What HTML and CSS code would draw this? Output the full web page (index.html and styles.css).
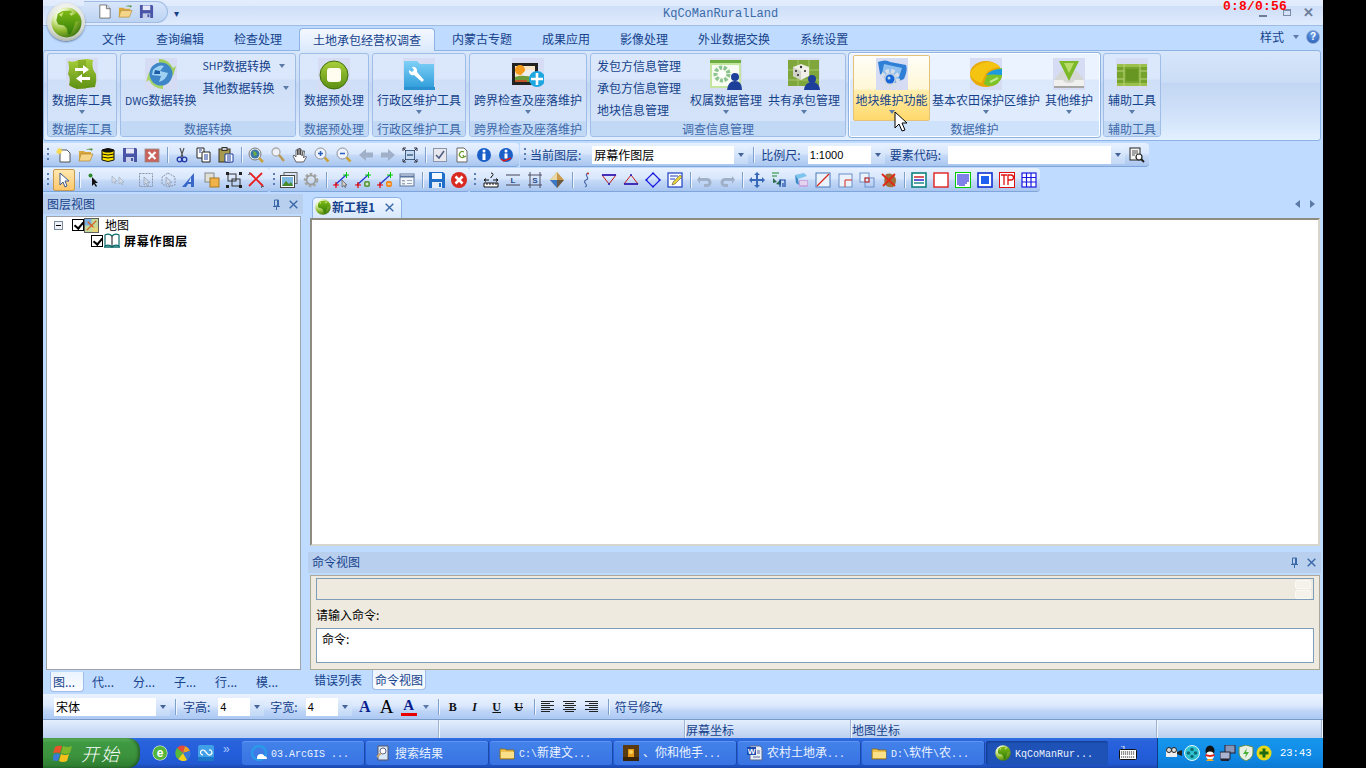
FILE: index.html
```html
<!DOCTYPE html>
<html lang="zh-CN">
<head>
<meta charset="utf-8">
<title>KqCoManRuralLand</title>
<link rel="stylesheet" href="styles.css">
</head>
<body>
<svg class="sprite" xmlns="http://www.w3.org/2000/svg">
<defs>
<radialGradient id="gGlobe" cx=".3" cy=".22" r=".9"><stop offset="0" stop-color="#ffffff"/><stop offset=".3" stop-color="#dcefa8"/><stop offset=".62" stop-color="#8db82c"/><stop offset="1" stop-color="#2f6a0c"/></radialGradient>
<linearGradient id="gLand" x1="0" y1="0" x2="0" y2="1"><stop offset="0" stop-color="#7fbb14"/><stop offset="1" stop-color="#2f7a0a"/></linearGradient>
<linearGradient id="gGreen" x1="0" y1="0" x2="0" y2="1"><stop offset="0" stop-color="#a9cf3a"/><stop offset="1" stop-color="#5c8f14"/></linearGradient>
<linearGradient id="gBlue" x1="0" y1="0" x2="0" y2="1"><stop offset="0" stop-color="#7fd0f7"/><stop offset="1" stop-color="#2a9ad8"/></linearGradient>

<symbol id="b-db" viewBox="0 0 32 32"><path d="M2 3q6 2 10-1l9-1 6 1q-2 8 3 14 1 7-1 13l-8 1-10 1q-6-2-8-4 2-6-1-11 2-6 0-13z" fill="url(#gGreen)"/><path d="M12 2h8v29h-8z" fill="#6d9a18" opacity=".5"/><path d="M9 10h8V7l6 4.5-6 4.5v-3H9zM24 19h-8v-3l-6 4.5 6 4.5v-3h8z" fill="#fff"/></symbol>
<symbol id="b-dwg" viewBox="0 0 32 32"><path d="M14 1a15 15 0 0 1 14 9l3-2-3 10-7-6 3-1a11 11 0 0 0-10-6z" fill="#9fcf5a"/><path d="M18 31A15 15 0 0 1 4 22l-3 2 3-10 7 6-3 1a11 11 0 0 0 10 6z" fill="#a8d468"/><circle cx="16" cy="16" r="11.500" fill="#3f86c8"/><path d="M8 12q6-6 11-4l-4 5 8 2q-2 7-9 9l2-6-9-1z" fill="#9fd2f2"/><path d="M10 12l5 1 0 3-6 0z" fill="#1b5ea6"/></symbol>
<symbol id="b-stop" viewBox="0 0 32 32"><circle cx="16" cy="17" r="14" fill="url(#gGreen)"/><circle cx="16" cy="17" r="14" fill="none" stroke="#3f6f10" stroke-width="1"/><rect x="9" y="10" width="14" height="14" rx="3" fill="#fffdf0"/></symbol>
<symbol id="b-folder" viewBox="0 0 32 32"><path d="M1 3h13l3 3h14v26H1z" fill="url(#gBlue)"/><path d="M1 29h31v3H1z" fill="#2a90d0"/><path d="M9 9a4 4 0 0 1 5 5l7 8-2 2-8-7a4 4 0 0 1-5-5l3 2 2-2z" fill="#fff"/></symbol>
<symbol id="b-pic" viewBox="0 0 32 32"><rect x="0" y="5" width="26" height="22" fill="#222"/><rect x="3" y="8" width="20" height="16" fill="#f6e6c6"/><circle cx="8" cy="12" r="5" fill="#f49a1a"/><path d="M10 16q6-7 13-3v6H10z" fill="#eee"/><path d="M3 19q8-3 20 1v4H3z" fill="#6f9c3a"/><path d="M3 22h12v2H3z" fill="#c0552a"/><circle cx="25" cy="21" r="8" fill="#1ea6e0"/><path d="M23.700 15h2.600v4.700H31v2.600h-4.700V27h-2.600v-4.700H19v-2.600h4.700z" fill="#fff"/></symbol>
<symbol id="b-gearuser" viewBox="0 0 32 32"><rect x="0" y="2" width="31" height="28" fill="#c4e5a0"/><path d="M0 2h31v3H0z" fill="#6cae42"/><rect x="2" y="7" width="27" height="21" fill="#f7fbf1"/><circle cx="12" cy="16" r="6.500" fill="none" stroke="#8bc48f" stroke-width="4" stroke-dasharray="3 1.500"/><circle cx="12" cy="16" r="3" fill="#fff"/><circle cx="25" cy="19" r="4" fill="#1d3f9a"/><path d="M17 32q1-9 8-9t7 9z" fill="#1d3f9a"/></symbol>
<symbol id="b-dice" viewBox="0 0 32 32"><rect x="0" y="2" width="31" height="26" fill="#7fa63a"/><path d="M0 12h31M0 22h31M10 2v26M21 2v26" stroke="#a7c66c" stroke-width="1" fill="none"/><path d="M13 6l8 3v9l-8 4-8-4V9z" fill="#f0f0e8"/><path d="M13 13v9l-8-4V9z" fill="#cfd0c6"/><g fill="#333"><circle cx="13" cy="9" r="1.200"/><circle cx="8" cy="13" r="1.100"/><circle cx="10" cy="17" r="1.100"/><circle cx="17" cy="13" r="1.100"/></g><circle cx="24" cy="21" r="4" fill="#1d3f9a"/><path d="M16 32q1-8 8-8t8 8z" fill="#1d3f9a"/></symbol>
<symbol id="b-fgear" viewBox="0 0 32 32"><path d="M2 4q8-3 12 0l16 3q2 5-2 14L16 26 4 16z" fill="#2f7fd6"/><path d="M8 6l18 4-4 12-16-6z" fill="#8fc0f0"/><circle cx="14" cy="21" r="8" fill="none" stroke="#d8dee8" stroke-width="4" stroke-dasharray="3.500 2"/><circle cx="14" cy="21" r="6" fill="#c8d2e0"/><circle cx="14" cy="21" r="4.500" fill="#1565d8"/><circle cx="13" cy="20" r="1.500" fill="#bde"/></symbol>
<symbol id="b-pie" viewBox="0 0 32 32"><ellipse cx="16" cy="16" rx="16" ry="13" fill="#e8a908"/><path d="M0 16q4-10 17-12 9 0 13 5-12 1-15 8t-4 8Q2 22 0 16z" fill="#f5c411"/><path d="M14 26q2-14 18-16v8q-2 10-14 10z" fill="#7cc32a"/><path d="M16 17q5-6 16-6v6q-10-1-16 0z" fill="#1d9be0"/><path d="M20 24l8-4" stroke="#bfe98a" stroke-width="2"/></symbol>
<symbol id="b-tray" viewBox="0 0 32 32"><path d="M8 13h16l7 9v7H1v-7z" fill="#d5d7d5"/><path d="M1 22h9q1 3 6 3t6-3h9v7H1z" fill="#f0f0ee"/><path d="M1 28h30v2H1z" fill="#a6a8a6"/><path d="M6 3h20l-10 20z" fill="#7cb928"/><path d="M11 5h10l-5 10z" fill="#b9dc6a"/></symbol>
<symbol id="b-map" viewBox="0 0 32 32"><rect x="1" y="6" width="30" height="22" fill="#76a32c"/><path d="M1 6h30v3H1zM1 25h30v3H1z" fill="#9dc04c"/><path d="M8 6v22M24 6v22" stroke="#b9d47a" stroke-width="1"/><path d="M1 13h7M1 21h7M24 13h7M24 21h7" stroke="#b9d47a"/><rect x="10" y="11" width="12" height="12" fill="#679722"/></symbol>

<symbol id="globe" viewBox="0 0 32 32"><circle cx="16" cy="16" r="15.500" fill="url(#gGlobe)"/><path d="M7 7l5-3 8-.5 2 2-3 1.500 2 2 5-3 3 3q1 3 .5 5l-4 1-1.500 4.500L22 25l-2 3.500-2.500 0-1-6-3-3.500-6-1-2-4z" fill="url(#gLand)"/><path d="M8 8l5-3-2 5z" fill="#c7e26a"/></symbol>
<symbol id="new" viewBox="0 0 16 16"><path d="M3 1h7l4 4v10H3z" fill="#fff" stroke="#555" stroke-width=".8"/><path d="M10 1v4h4" fill="#d8d8d8" stroke="#555" stroke-width=".8"/></symbol>
<symbol id="newstar" viewBox="0 0 16 16"><path d="M4 3h7l3 3v9H4z" fill="#fff" stroke="#444" stroke-width=".9"/><path d="M3 0l1 2 2-1-1 2 2 1-2 1 1 2-2-1-1 2-1-2-2 1 1-2-1-1 2-1-1-2 2 1z" fill="#f6d94c"/></symbol>
<symbol id="open" viewBox="0 0 16 16"><path d="M1 4h5l1 1h6v2H4L1 14z" fill="#d9a83c"/><path d="M3 7h12l-3 7H1z" fill="#f5d58a" stroke="#a87c1c" stroke-width=".6"/><path d="M8 3q2-2 5-1l-1-1 3 1-2 2v-1q-3-1-5 0z" fill="#4a8a2a"/></symbol>
<symbol id="save" viewBox="0 0 16 16"><path d="M1 1h13l1 1v13H1z" fill="#4a55a8"/><rect x="4" y="1.500" width="8" height="5" fill="#e4e8f8"/><rect x="4" y="10" width="8" height="5" fill="#c6cfe8"/><rect x="9" y="11" width="2" height="3" fill="#4a55a8"/></symbol>
<symbol id="dbicon" viewBox="0 0 16 16"><path d="M2 3q6-3 12 0v10q-6 3-12 0z" fill="#ffe600" stroke="#111" stroke-width="1"/><ellipse cx="8" cy="3.500" rx="6" ry="2" fill="#111"/><path d="M2 7q6 2 12 0M2 10q6 2 12 0" fill="none" stroke="#111"/></symbol>
<symbol id="xbox" viewBox="0 0 16 16"><rect x="1" y="2" width="14" height="13" fill="#c8625a" stroke="#9a8a88" stroke-width=".8"/><path d="M4.500 5l7 7M11.500 5l-7 7" stroke="#fff" stroke-width="2.200"/></symbol>
<symbol id="cut" viewBox="0 0 16 16"><path d="M6 1l3 9M10 1L7 10" stroke="#555" stroke-width="1.200"/><circle cx="5.500" cy="12.500" r="2.300" fill="none" stroke="#2036a8" stroke-width="1.300"/><circle cx="10.500" cy="12.500" r="2.300" fill="none" stroke="#2036a8" stroke-width="1.300"/></symbol>
<symbol id="copy" viewBox="0 0 16 16"><path d="M1 1h7v10H1z" fill="#fff" stroke="#222"/><path d="M6 5h8v10H6z" fill="#fff" stroke="#222"/><path d="M3 3h3M3 5h2M8 8h4M8 10h4M8 12h4" stroke="#1c3fa0"/></symbol>
<symbol id="paste" viewBox="0 0 16 16"><rect x="1" y="2" width="11" height="13" fill="#a89a4c" stroke="#333"/><rect x="4" y="0.500" width="5" height="3" fill="#c8c8c8" stroke="#333"/><path d="M7 7h8v8H7z" fill="#fff" stroke="#1c3fa0"/><path d="M9 9h4M9 11h4M9 13h4" stroke="#1c3fa0"/></symbol>
<symbol id="gsearch" viewBox="0 0 16 16"><circle cx="7" cy="7" r="6" fill="#f4f4f0" stroke="#777"/><circle cx="7" cy="7" r="4.500" fill="#3b78a8"/><path d="M5 4l3 1 1 3-3 1z" fill="#6cae42"/><path d="M11 11l4 4" stroke="#c9a23a" stroke-width="2.500"/></symbol>
<symbol id="lens" viewBox="0 0 16 16"><circle cx="6" cy="5" r="4" fill="#eef2f8" stroke="#aaa" stroke-width="1.300"/><path d="M9 8l5 6" stroke="#b89a5a" stroke-width="2.500"/></symbol>
<symbol id="hand" viewBox="0 0 16 16"><path d="M4 15l-3-6 1-1 2 2V3h1.500v5-6H7v6-6.500h1.500V8V3H10v6l1-5h1.500l-1 7 2-2 1 1-3 5z" fill="#fff" stroke="#444" stroke-width=".8"/></symbol>
<symbol id="zin" viewBox="0 0 16 16"><circle cx="6.500" cy="6.500" r="5.500" fill="#eef3fb" stroke="#8a8f98"/><path d="M4 6.500h5M6.500 4v5" stroke="#2a5fc0" stroke-width="1.500"/><path d="M10.500 10.500l4 4" stroke="#c9a23a" stroke-width="2.500"/></symbol>
<symbol id="zout" viewBox="0 0 16 16"><circle cx="6.500" cy="6.500" r="5.500" fill="#eef3fb" stroke="#8a8f98"/><path d="M4 6.500h5" stroke="#2a5fc0" stroke-width="1.500"/><path d="M10.500 10.500l4 4" stroke="#c9a23a" stroke-width="2.500"/></symbol>
<symbol id="aback" viewBox="0 0 16 16"><path d="M1 8l7-6v3.500h7v5H8V14z" fill="#9fb0c8"/></symbol>
<symbol id="afwd" viewBox="0 0 16 16"><path d="M15 8L8 2v3.500H1v5h7V14z" fill="#9fb0c8"/></symbol>
<symbol id="fit" viewBox="0 0 16 16"><rect x="3.500" y="3.500" width="9" height="9" fill="#c7d9ef" stroke="#43628a"/><path d="M5 8h6" stroke="#43628a" stroke-width="1.500"/><path d="M1 4V1h3M12 1h3v3M15 12v3h-3M4 15H1v-3M1 1l3 3M15 1l-3 3M15 15l-3-3M1 15l3-3" fill="none" stroke="#334"/></symbol>
<symbol id="chk" viewBox="0 0 16 16"><rect x="1.500" y="1.500" width="13" height="13" fill="#e6e8ee" stroke="#8c96a8"/><path d="M4 8l3 3 5-7" fill="none" stroke="#4a5a80" stroke-width="1.500"/></symbol>
<symbol id="docg" viewBox="0 0 16 16"><path d="M3 1h7l3 3v11H3z" fill="#fff" stroke="#666"/><path d="M10 5a3 3 0 1 0 0 5M9 8l1 2 2-1" fill="none" stroke="#6a9a2a" stroke-width="1.200"/></symbol>
<symbol id="info" viewBox="0 0 16 16"><circle cx="8" cy="8" r="7" fill="#1a5fc8"/><circle cx="8" cy="4" r="1.500" fill="#fff"/><rect x="6.500" y="6.500" width="3" height="6.500" fill="#fff"/></symbol>
<symbol id="infor" viewBox="0 0 16 16"><circle cx="8" cy="8" r="7" fill="#1a5fc8"/><circle cx="8" cy="4" r="1.500" fill="#fff"/><rect x="6.500" y="6.500" width="3" height="5" fill="#fff"/><path d="M3 12l3 2 7-3" fill="none" stroke="#e01818" stroke-width="1.500"/></symbol>
<symbol id="find" viewBox="0 0 16 16"><rect x="1" y="1" width="10" height="12" fill="#f4f4f4" stroke="#222"/><path d="M3 4h6M3 6h6M3 8h3" stroke="#555"/><circle cx="10" cy="10" r="3" fill="#fff" stroke="#222" stroke-width="1.200"/><path d="M12 12l3 3" stroke="#222" stroke-width="2"/></symbol>

<symbol id="arrow" viewBox="0 0 16 16"><path d="M4 1v12l3-3 2 5 2-1-2-5h4z" fill="#fff" stroke="#3a5a90"/></symbol>
<symbol id="black" viewBox="0 0 16 16"><path d="M6 5v9l2-2 2 3 1-1-2-3h3z" fill="#111"/><circle cx="4.500" cy="3.500" r="2" fill="#2a8a2a"/></symbol>
<symbol id="arrows2" viewBox="0 0 16 16"><path d="M2 4v7l2-1.500 1 2.500 1-.5-1-2.500h2zM9 5v7l2-1.500 1 2.500 1-.5-1-2.500h2z" fill="#d6dde8" stroke="#9aa8bc" stroke-width=".6"/></symbol>
<symbol id="seld" viewBox="0 0 16 16"><rect x="1.500" y="1.500" width="13" height="13" fill="none" stroke="#8a94a8" stroke-dasharray="2 1"/><path d="M6 5v8l2-2 1 3 1.500-.5-1-3H12z" fill="#cfd8e6" stroke="#8a94a8" stroke-width=".6"/></symbol>
<symbol id="seld2" viewBox="0 0 16 16"><path d="M8 1L15 5v8l-7 2-6-3V5z" fill="none" stroke="#8a94a8" stroke-dasharray="2 1"/><path d="M6 5v8l2-2 1 3 1.500-.5-1-3H12z" fill="#cfd8e6" stroke="#8a94a8" stroke-width=".6"/></symbol>
<symbol id="ablue" viewBox="0 0 16 16"><path d="M12 1v14H9v-3H6l-2 3H0z" fill="#3a68c8"/><path d="M9 5v5H6.500z" fill="#cfe0f6"/></symbol>
<symbol id="squares" viewBox="0 0 16 16"><rect x="1" y="1" width="9" height="9" fill="#e0e0d8" stroke="#888"/><rect x="6" y="6" width="9" height="9" fill="#f2b24a" stroke="#a67a20"/></symbol>
<symbol id="group" viewBox="0 0 16 16"><rect x="2" y="2" width="8" height="7" fill="none" stroke="#333"/><rect x="6" y="7" width="8" height="7" fill="none" stroke="#333"/><path d="M0 0h3v3H0zM13 0h3v3h-3zM0 13h3v3H0zM13 13h3v3h-3z" fill="#222"/></symbol>
<symbol id="redx" viewBox="0 0 16 16"><path d="M1 14L14 1M2 1l13 13" stroke="#e82020" stroke-width="1.800"/><path d="M1 3v-2h2M13 15h2v-2" fill="none" stroke="#111" stroke-dasharray="1 1"/></symbol>
<symbol id="picture" viewBox="0 0 18 16"><rect x="4" y="0.500" width="13" height="11" fill="#d8e4f4" stroke="#666"/><rect x="0.500" y="3.500" width="14" height="12" fill="#fff" stroke="#444"/><rect x="2" y="5" width="11" height="9" fill="#7fb8e0"/><path d="M2 14l4-5 3 3 2-2 2 4z" fill="#4b8a2a"/></symbol>
<symbol id="gear" viewBox="0 0 16 16"><circle cx="8" cy="8" r="5.500" fill="none" stroke="#a6a8a6" stroke-width="3.500" stroke-dasharray="2.500 1.500"/><circle cx="8" cy="8" r="4.500" fill="none" stroke="#9a9c9a" stroke-width="1.500"/><circle cx="8" cy="8" r="2" fill="#d8dce2"/></symbol>
<symbol id="e1" viewBox="0 0 16 16"><path d="M2 13L13 3" stroke="#2233cc" stroke-width="1.200"/><path d="M10 3h7M13.500 0v6" stroke="#0c0" stroke-width="1"/><path d="M0 13h6M3 10v6" stroke="#e00" stroke-width="1.200"/><path d="M9 8v7l2-1.500 1 2 1-.5-1-2h2z" fill="#ccc" stroke="#444" stroke-width=".6"/></symbol>
<symbol id="e2" viewBox="0 0 16 16"><path d="M2 13L13 3" stroke="#2233cc" stroke-width="1.200"/><path d="M10 3h7M13.500 0v6" stroke="#0c0"/><path d="M0 13h6M3 10v6" stroke="#e00" stroke-width="1.200"/><rect x="9" y="9" width="6" height="6" rx="2" fill="#5a9a3a"/><path d="M10.500 12h3M12 10.500v3" stroke="#fff"/></symbol>
<symbol id="e3" viewBox="0 0 16 16"><path d="M2 13L13 3" stroke="#2233cc" stroke-width="1.200"/><path d="M10 3h7M13.500 0v6" stroke="#0c0"/><path d="M0 13h6M3 10v6" stroke="#e00" stroke-width="1.200"/><rect x="9" y="9" width="6" height="6" rx="2" fill="#f08a1a"/><path d="M10.500 12h3" stroke="#fff"/></symbol>
<symbol id="form" viewBox="0 0 16 16"><rect x="1" y="2" width="14" height="12" fill="#f4f6fa" stroke="#5a76a0"/><path d="M1 4.500h14" stroke="#5a76a0" stroke-width="2"/><path d="M3 8h3v1.500H3zM3 11h3v1.500H3z" fill="#9ab"/><path d="M8 8.500h5M8 11.500h5" stroke="#9ab"/></symbol>
<symbol id="saveb" viewBox="0 0 16 16"><path d="M0 0h14l2 2v14H0z" fill="#1f6ec8"/><rect x="3" y="1" width="10" height="6" fill="#f4f8ff"/><rect x="3" y="10" width="10" height="6" fill="#e4ecf8"/><rect x="10" y="11" width="2" height="4" fill="#1f6ec8"/></symbol>
<symbol id="stopred" viewBox="0 0 16 16"><circle cx="8" cy="8" r="8" fill="#d82a20"/><path d="M4.500 4.500l7 7M11.500 4.500l-7 7" stroke="#fff" stroke-width="2.600"/></symbol>
<symbol id="ruler" viewBox="0 0 16 16"><path d="M1 11h14v4H1z" fill="#fff" stroke="#111"/><path d="M4 11v2M7 11v2M10 11v2M13 11v2" stroke="#111"/><path d="M1 8h5M1 8l2-1.500M1 8l2 1.500M15 8h-5M15 8l-2-1.500M15 8l-2 1.500M8 1q2 0 2 1.500T8 5v1" fill="none" stroke="#111"/></symbol>
<symbol id="lbar" viewBox="0 0 16 16"><path d="M1 3h14M1 13h14" stroke="#445"/><text x="8" y="11" font-size="8" fill="#2a4a8a" text-anchor="middle" font-family="Liberation Sans">L</text></symbol>
<symbol id="sbar" viewBox="0 0 16 16"><path d="M1 3h14M1 13h14M3 0v16M13 0v16" stroke="#445" stroke-width=".9"/><text x="8" y="11" font-size="8" fill="#2a4a8a" text-anchor="middle" font-family="Liberation Sans" font-weight="bold">S</text></symbol>
<symbol id="mosaic" viewBox="0 0 16 16"><path d="M8 0l7 8-7 8-7-8z" fill="#c89a4a"/><path d="M8 0v8H1z" fill="#e8d8a8"/><path d="M8 8h7l-7 8z" fill="#6a5a4a"/><path d="M8 8v8L1 8z" fill="#3a78c8"/></symbol>
<symbol id="squig" viewBox="0 0 16 16"><path d="M9 1C4 3 12 6 7 8s4 5-1 7" fill="none" stroke="#4a6aa8" stroke-width="1.200"/><circle cx="9" cy="1.500" r="1" fill="#c22"/></symbol>
<symbol id="tdown" viewBox="0 0 16 16"><path d="M1 3h14L8 12z" fill="none" stroke="#c01818"/><path d="M1 3h14" stroke="#1818c8" stroke-width="1.500"/><circle cx="8" cy="12" r="1" fill="#1818c8"/></symbol>
<symbol id="tup" viewBox="0 0 16 16"><path d="M1 12h14L8 3z" fill="none" stroke="#c01818"/><path d="M1 12h14" stroke="#1818c8" stroke-width="1.500"/><circle cx="8" cy="3" r="1" fill="#1818c8"/></symbol>
<symbol id="diam" viewBox="0 0 16 16"><path d="M8 1l7 7-7 7-7-7z" fill="none" stroke="#1818e0" stroke-width="1.200"/><g fill="#1818e0"><circle cx="8" cy="1.500" r="1"/><circle cx="8" cy="14.500" r="1"/><circle cx="1.500" cy="8" r="1"/><circle cx="14.500" cy="8" r="1"/></g></symbol>
<symbol id="editp" viewBox="0 0 16 16"><rect x="1" y="1" width="14" height="14" fill="#fff" stroke="#1a3fc0" stroke-width="1.200"/><path d="M3 4h8M3 7h5" stroke="#1a3fc0"/><path d="M5 13l1-3 7-7 2 2-7 7z" fill="#e8d23a" stroke="#555" stroke-width=".6"/></symbol>
<symbol id="undo" viewBox="0 0 16 16"><path d="M3 6h7a4 4 0 0 1 0 9H7v-3h3a1 1 0 0 0 0-3H3v3L0 7.500 3 4z" fill="#9fb0c8"/></symbol>
<symbol id="redo" viewBox="0 0 16 16"><path d="M13 6H6a4 4 0 0 0 0 9h3v-3H6a1 1 0 0 1 0-3h7v3l3-4.500L13 4z" fill="#9fb0c8"/></symbol>
<symbol id="move" viewBox="0 0 16 16"><path d="M8 0l3 3H9v4h4V5l3 3-3 3V9H9v4h2l-3 3-3-3h2V9H3v2L0 8l3-3v2h4V3H5z" fill="#3a68b8"/></symbol>
<symbol id="trans" viewBox="0 0 16 16"><path d="M1 1h7M1 4h5" stroke="#1a8a2a" stroke-width="1.200"/><path d="M2 6l4 4-4 1zM10 7l-5 5 5 1z" fill="#2a6a4a"/><path d="M9 15V8h5v7M12 15v-4" fill="none" stroke="#1a4aa8" stroke-width="1.200"/></symbol>
<symbol id="stack" viewBox="0 0 16 16"><path d="M2 3l9-2 3 3-9 3z" fill="#7cc4ec"/><path d="M2 3l3 4 1 6-3-2z" fill="#3a8ac8"/><rect x="6" y="8" width="9" height="7" fill="#c8a8e0"/><path d="M7 10h7M7 12h7" stroke="#fff"/></symbol>
<symbol id="sqdiag" viewBox="0 0 16 16"><rect x="1" y="1" width="14" height="14" fill="#eaf2fc" stroke="#4a78b8"/><path d="M2 14L14 2" stroke="#d8281c" stroke-width="1.200"/></symbol>
<symbol id="sqcorner" viewBox="0 0 16 16"><rect x="2" y="2" width="13" height="13" fill="#eaf2fc" stroke="#6a90c8"/><path d="M8 15V8h7" fill="none" stroke="#d8281c"/></symbol>
<symbol id="sqover" viewBox="0 0 16 16"><rect x="1" y="1" width="9" height="9" fill="#eaf2fc" stroke="#6a90c8"/><rect x="6" y="6" width="9" height="9" fill="none" stroke="#6a90c8"/><rect x="6" y="6" width="4" height="4" fill="none" stroke="#d8281c"/></symbol>
<symbol id="bug" viewBox="0 0 16 16"><path d="M5 2q6-2 9 3t-2 10q-6 1-8-3T5 2z" fill="#a0703a"/><path d="M1 2l13 12M14 2L2 14" stroke="#e02818" stroke-width="1.800"/></symbol>
<symbol id="f1" viewBox="0 0 16 16"><rect x="1" y="1" width="14" height="14" fill="#fff" stroke="#108080" stroke-width="1.600"/><path d="M3 5h10" stroke="#c81818" stroke-width="1.400"/><path d="M3 8h10" stroke="#1818c8" stroke-width="1.400"/><path d="M3 11h10" stroke="#108080" stroke-width="1.400"/></symbol>
<symbol id="f2" viewBox="0 0 16 16"><rect x="1" y="1" width="14" height="14" fill="#fff" stroke="#e01010" stroke-width="1.300"/></symbol>
<symbol id="f3" viewBox="0 0 16 16"><rect x="0.500" y="0.500" width="15" height="15" fill="#fff" stroke="#0c0"/><path d="M3 2v11M5 2v12M7 2v12M9 2v12M11 2v10M13 2v8" stroke="#1818d8" stroke-width="1.100"/></symbol>
<symbol id="f4" viewBox="0 0 16 16"><rect x="1" y="1" width="14" height="14" fill="#fff" stroke="#1030d0" stroke-width="1.600"/><rect x="4" y="4" width="8" height="8" fill="#2060f0"/></symbol>
<symbol id="f5" viewBox="0 0 16 16"><rect x="0.500" y="0.500" width="15" height="15" fill="#fff" stroke="#e01010"/><path d="M2 3h6M5 3v10M9 13V3h3a2.500 2.500 0 0 1 0 5H9" fill="none" stroke="#e01010" stroke-width="1.300"/></symbol>
<symbol id="f6" viewBox="0 0 16 16"><rect x="1" y="1" width="14" height="14" fill="#fff" stroke="#1818e0" stroke-width="1.200"/><path d="M1 5.500h14M1 10h14M5.500 1v14M10 1v14" stroke="#1818e0" stroke-width="1.200"/></symbol>

<symbol id="pin" viewBox="0 0 9 11"><path d="M1 7.500h7M2.500 1h4v6h-4zM5.500 1v6M4.500 8v3" fill="none" stroke="#3a68a8" stroke-width="1"/></symbol>
<symbol id="close" viewBox="0 0 9 9"><path d="M.7.7l7.600 7.600M8.300.7L.7 8.300" stroke="#3a68a8" stroke-width="1.400"/></symbol>
<symbol id="layer" viewBox="0 0 16 16"><rect x=".5" y=".5" width="15" height="15" fill="#c4d89a" stroke="#555"/><path d="M1 1h7v7H1z" fill="#7aaee0"/><path d="M3 13L13 3M4 4l8 8" stroke="#d8581c" stroke-width="1.300"/><path d="M9 10h6v5H9z" fill="#e6d67a"/></symbol>
<symbol id="book" viewBox="0 0 16 16"><path d="M8 3Q5 0 1 2v11q4-2 7 1 3-3 7-1V2q-4-2-7 1z" fill="#fff" stroke="#0a6a6a" stroke-width="1.200"/><path d="M8 3v11" stroke="#111"/><path d="M0 14h16" stroke="#0a6a6a" stroke-width="1.500"/></symbol>
<symbol id="win" viewBox="0 0 20 20"><path d="M2 4q3-2 7-1l-2 7q-3-1-7 0z" fill="#e8532a"/><path d="M10 3q4 2 9 0l-2 7q-5 2-9 0z" fill="#7cb82a"/><path d="M0 11q3-1 6 0l-2 7q-3-1-6 0z" fill="#3a7ad8" transform="translate(1 0)"/><path d="M8 11q4 2 8 0l-2 7q-4 2-8 0z" fill="#f5c01a"/></symbol>
<symbol id="ie" viewBox="0 0 16 16"><circle cx="8" cy="8" r="7.500" fill="#fff"/><circle cx="8" cy="8" r="7" fill="#53b53a"/><text x="8" y="12" font-size="12" font-weight="bold" fill="#fff" text-anchor="middle" font-family="Liberation Sans">e</text></symbol>
<symbol id="browser" viewBox="0 0 16 16"><path d="M8 8L2 3a8 8 0 0 1 8-2z" fill="#e84a3a"/><path d="M8 8l2-7a8 8 0 0 1 5 5z" fill="#f0a020"/><path d="M8 8l7-2a8 8 0 0 1-3 9z" fill="#3a78d8"/><path d="M8 8l4 7a8 8 0 0 1-9-1z" fill="#f2d21c"/><path d="M8 8l-5 6A8 8 0 0 1 2 3z" fill="#58b838"/></symbol>
<symbol id="cloud" viewBox="0 0 16 16"><rect width="16" height="16" rx="2" fill="#3fa0e8"/><rect y="12" width="16" height="4" fill="#1c78c8"/><path d="M5 10a2.500 2.500 0 1 1 1.500-4.500L9.500 9A2.500 2.500 0 1 0 11 5" fill="none" stroke="#fff" stroke-width="1.200"/></symbol>
<symbol id="arc" viewBox="0 0 16 16"><circle cx="8" cy="8" r="7" fill="none" stroke="#2a9ae8" stroke-width="2.500"/><path d="M6 13q0-4 4-4 3 0 3 2 3 0 3 3H6z" fill="#fff"/></symbol>
<symbol id="search" viewBox="0 0 16 16"><path d="M3 1h10v14H3z" fill="#d8e8f8" stroke="#556"/><circle cx="8" cy="6" r="3" fill="#fff" stroke="#668"/><path d="M6 8l-4 4" stroke="#c8a87a" stroke-width="2"/></symbol>
<symbol id="fold" viewBox="0 0 16 16"><path d="M1 4h5l1 1h8v9H1z" fill="#f0c350" stroke="#8a6a18" stroke-width=".8"/><path d="M2 7h13v6H2z" fill="#fbe08a"/></symbol>
<symbol id="movie" viewBox="0 0 16 16"><rect width="16" height="16" fill="#5a3a10"/><rect x="5" y="4" width="6" height="8" fill="#e89a1a"/><circle cx="8" cy="7" r="2" fill="#fad25a"/><rect y="12" width="16" height="4" fill="#3a2408"/></symbol>
<symbol id="word" viewBox="0 0 16 16"><path d="M3 1h10l2 2v12H3z" fill="#e8eef8" stroke="#5a6a90"/><rect x="0" y="2" width="9" height="8" fill="#1a4ab0"/><text x="4.500" y="9" font-size="8" font-weight="bold" fill="#fff" text-anchor="middle" font-family="Liberation Sans">W</text><path d="M6 12h7M10 8h3M10 6h3" stroke="#5a6a90"/></symbol>
<symbol id="kb" viewBox="0 0 18 14"><rect x="0.500" y="3.500" width="17" height="10" rx="1" fill="#fff" stroke="#111"/><path d="M2 6h14M2 8h14M2 11h14" stroke="#222" stroke-dasharray="1.200 .8"/><path d="M2 0h3v3" fill="none" stroke="#eee"/></symbol>
<symbol id="cam" viewBox="0 0 16 16"><rect x="0" y="4" width="11" height="8" fill="#eee"/><circle cx="3" cy="5" r="2.500" fill="#ddd" stroke="#222"/><circle cx="8" cy="5" r="2.500" fill="#ddd" stroke="#222"/><path d="M11 7l5-2v6l-5-2z" fill="#222"/></symbol>
<symbol id="film" viewBox="0 0 16 16"><circle cx="8" cy="8" r="7.500" fill="#2fc4d0" stroke="#e6f8fa"/><circle cx="8" cy="4.500" r="1.800" fill="#0f6a78"/><circle cx="8" cy="11.500" r="1.800" fill="#0f6a78"/><circle cx="4.500" cy="8" r="1.800" fill="#0f6a78"/><circle cx="11.500" cy="8" r="1.800" fill="#0f6a78"/></symbol>
<symbol id="qq" viewBox="0 0 16 16"><ellipse cx="8" cy="6" rx="4.500" ry="5.500" fill="#111"/><ellipse cx="8" cy="10.500" rx="4" ry="4" fill="#fff"/><path d="M4 9q4 2 8 0l1 2-5 1-5-1z" fill="#e02018"/><path d="M6 14h4l2 2H4z" fill="#f2a81a"/></symbol>
<symbol id="net" viewBox="0 0 16 16"><rect x="5" y="0" width="10" height="8" fill="#8a96b8" stroke="#223"/><rect x="0" y="7" width="10" height="7" fill="#aab4d0" stroke="#223"/><path d="M1 15h8" stroke="#223" stroke-width="2"/></symbol>
<symbol id="shield" viewBox="0 0 16 16"><path d="M8 0l7 2v6q0 5-7 8-7-3-7-8V2z" fill="#e8f0e4" stroke="#5a8a4a"/><path d="M9 3L5 9h3l-1 4 4-6H8z" fill="#4ab03a"/></symbol>
<symbol id="plus360" viewBox="0 0 16 16"><circle cx="8" cy="8" r="7.500" fill="#e6d81a"/><path d="M6.500 3.500h3v3h3v3h-3v3h-3v-3h-3v-3h3z" fill="#1f6a10"/></symbol>
</defs>
</svg>

<div class="frame">

  <header class="titlebar">
    <div class="qat">
      <svg class="i16"><use href="#new"/></svg>
      <svg class="i16"><use href="#open"/></svg>
      <svg class="i16"><use href="#save"/></svg>
    </div>
    <span class="qat-caret">▾</span>
    <span class="apptitle">KqCoManRuralLand</span>
    <div class="winctl"><span class="wc-min"></span><span class="wc-max"></span><span class="wc-close">✕</span></div>
  </header>
  <span class="orb"><svg class="orb-globe"><use href="#globe"/></svg></span>
  <span class="timer">0:8/0:56</span>

  <nav class="tabs">
    <a class="tab">文件</a><a class="tab">查询编辑</a><a class="tab">检查处理</a><a class="tab active">土地承包经营权调查</a><a class="tab">内蒙古专题</a><a class="tab">成果应用</a><a class="tab">影像处理</a><a class="tab">外业数据交换</a><a class="tab">系统设置</a>
    <span class="style-menu">样式<i class="caret"></i><span class="help">?</span></span>
  </nav>

  <section class="ribbon">
    <div class="group">
      <div class="g-body"><div class="big"><svg class="icon32"><use href="#b-db"/></svg><span>数据库工具</span><i class="caret"></i></div></div>
      <div class="cap">数据库工具</div>
    </div>
    <div class="group">
      <div class="g-body g-dwg">
        <div class="big"><svg class="icon32"><use href="#b-dwg"/></svg><span><span class="abc">DWG</span>数据转换</span></div>
        <div class="smalls">
          <div class="small"><span class="abc">SHP</span>数据转换<i class="caret"></i></div>
          <div class="small">其他数据转换<i class="caret"></i></div>
        </div>
      </div>
      <div class="cap">数据转换</div>
    </div>
    <div class="group">
      <div class="g-body"><div class="big"><svg class="icon32"><use href="#b-stop"/></svg><span>数据预处理</span></div></div>
      <div class="cap">数据预处理</div>
    </div>
    <div class="group">
      <div class="g-body"><div class="big"><svg class="icon32"><use href="#b-folder"/></svg><span>行政区维护工具</span><i class="caret"></i></div></div>
      <div class="cap">行政区维护工具</div>
    </div>
    <div class="group">
      <div class="g-body"><div class="big"><svg class="icon32"><use href="#b-pic"/></svg><span>跨界检查及座落维护</span><i class="caret"></i></div></div>
      <div class="cap">跨界检查及座落维护</div>
    </div>
    <div class="group">
      <div class="g-body g-survey">
        <div class="smalls">
          <div class="small">发包方信息管理</div>
          <div class="small">承包方信息管理</div>
          <div class="small">地块信息管理</div>
        </div>
        <div class="big"><svg class="icon32"><use href="#b-gearuser"/></svg><span>权属数据管理</span><i class="caret"></i></div>
        <div class="big"><svg class="icon32"><use href="#b-dice"/></svg><span>共有承包管理</span><i class="caret"></i></div>
      </div>
      <div class="cap">调查信息管理</div>
    </div>
    <div class="group hot">
      <div class="g-body g-maint">
        <div class="big lit"><svg class="icon32"><use href="#b-fgear"/></svg><span>地块维护功能</span><i class="caret"></i></div>
        <div class="big"><svg class="icon32"><use href="#b-pie"/></svg><span>基本农田保护区维护</span><i class="caret"></i></div>
        <div class="big"><svg class="icon32"><use href="#b-tray"/></svg><span>其他维护</span><i class="caret"></i></div>
      </div>
      <div class="cap">数据维护</div>
    </div>
    <div class="group">
      <div class="g-body"><div class="big"><svg class="icon32"><use href="#b-map"/></svg><span>辅助工具</span><i class="caret"></i></div></div>
      <div class="cap">辅助工具</div>
    </div>
  </section>

  <div class="toolrow row1">
    <div class="tb tb-a">
      <i class="grip"></i>
      <b class="b"><svg class="i16"><use href="#newstar"/></svg></b>
      <b class="b"><svg class="i16"><use href="#open"/></svg></b>
      <b class="b"><svg class="i16"><use href="#dbicon"/></svg></b>
      <b class="b"><svg class="i16"><use href="#save"/></svg></b>
      <b class="b"><svg class="i16"><use href="#xbox"/></svg></b>
      <i class="sep"></i>
      <b class="b"><svg class="i16"><use href="#cut"/></svg></b>
      <b class="b"><svg class="i16"><use href="#copy"/></svg></b>
      <b class="b"><svg class="i16"><use href="#paste"/></svg></b>
      <i class="sep"></i>
      <b class="b"><svg class="i16"><use href="#gsearch"/></svg></b>
      <b class="b"><svg class="i16"><use href="#lens"/></svg></b>
      <b class="b"><svg class="i16"><use href="#hand"/></svg></b>
      <b class="b"><svg class="i16"><use href="#zin"/></svg></b>
      <b class="b"><svg class="i16"><use href="#zout"/></svg></b>
      <b class="b"><svg class="i16"><use href="#aback"/></svg></b>
      <b class="b"><svg class="i16"><use href="#afwd"/></svg></b>
      <b class="b"><svg class="i16"><use href="#fit"/></svg></b>
      <i class="sep"></i>
      <b class="b"><svg class="i16"><use href="#chk"/></svg></b>
      <b class="b"><svg class="i16"><use href="#docg"/></svg></b>
      <b class="b"><svg class="i16"><use href="#info"/></svg></b>
      <b class="b"><svg class="i16"><use href="#infor"/></svg></b>
    </div>
    <div class="tb tb-b">
      <i class="grip"></i>
      <span class="lbl">当前图层:</span>
      <span class="combo c-layer">屏幕作图层<i class="drop"></i></span>
      <i class="sep"></i>
      <span class="lbl">比例尺:</span>
      <span class="combo c-scale">1:1000<i class="drop"></i></span>
      <span class="lbl">要素代码:</span>
      <span class="combo c-code"><i class="drop"></i></span>
      <b class="b"><svg class="i16"><use href="#find"/></svg></b>
    </div>
  </div>

  <div class="toolrow row2">
    <div class="tb tb-c">
      <i class="grip"></i>
      <b class="b on"><svg class="i16"><use href="#arrow"/></svg></b>
      <i class="sep"></i>
      <b class="b"><svg class="i16"><use href="#black"/></svg></b>
      <b class="b wide"><svg class="i16"><use href="#arrows2"/></svg></b>
      <b class="b"><svg class="i16"><use href="#seld"/></svg></b>
      <b class="b"><svg class="i16"><use href="#seld2"/></svg></b>
      <b class="b"><svg class="i16"><use href="#ablue"/></svg></b>
      <b class="b"><svg class="i16"><use href="#squares"/></svg></b>
      <b class="b"><svg class="i16"><use href="#group"/></svg></b>
      <b class="b"><svg class="i16"><use href="#redx"/></svg></b>
    </div>
    <div class="tb tb-d">
      <i class="grip"></i>
      <b class="b"><svg class="i18"><use href="#picture"/></svg></b>
      <b class="b"><svg class="i16"><use href="#gear"/></svg></b>
      <i class="sep"></i>
      <b class="b"><svg class="i16"><use href="#e1"/></svg></b>
      <b class="b"><svg class="i16"><use href="#e2"/></svg></b>
      <b class="b"><svg class="i16"><use href="#e3"/></svg></b>
      <b class="b"><svg class="i16"><use href="#form"/></svg></b>
      <i class="sep"></i>
      <b class="b"><svg class="i16"><use href="#saveb"/></svg></b>
      <b class="b"><svg class="i16"><use href="#stopred"/></svg></b>
    </div>
    <div class="tb tb-e">
      <i class="grip"></i>
      <b class="b"><svg class="i16"><use href="#ruler"/></svg></b>
      <b class="b"><svg class="i16"><use href="#lbar"/></svg></b>
      <b class="b"><svg class="i16"><use href="#sbar"/></svg></b>
      <b class="b"><svg class="i16"><use href="#mosaic"/></svg></b>
      <i class="sep"></i>
      <b class="b"><svg class="i16"><use href="#squig"/></svg></b>
      <b class="b"><svg class="i16"><use href="#tdown"/></svg></b>
      <b class="b"><svg class="i16"><use href="#tup"/></svg></b>
      <b class="b"><svg class="i16"><use href="#diam"/></svg></b>
      <b class="b"><svg class="i16"><use href="#editp"/></svg></b>
      <i class="sep"></i>
      <b class="b"><svg class="i16"><use href="#undo"/></svg></b>
      <b class="b"><svg class="i16"><use href="#redo"/></svg></b>
      <i class="sep"></i>
      <b class="b"><svg class="i16"><use href="#move"/></svg></b>
      <b class="b"><svg class="i16"><use href="#trans"/></svg></b>
      <b class="b"><svg class="i16"><use href="#stack"/></svg></b>
      <b class="b"><svg class="i16"><use href="#sqdiag"/></svg></b>
      <b class="b"><svg class="i16"><use href="#sqcorner"/></svg></b>
      <b class="b"><svg class="i16"><use href="#sqover"/></svg></b>
      <b class="b"><svg class="i16"><use href="#bug"/></svg></b>
      <i class="sep"></i>
      <b class="b"><svg class="i16"><use href="#f1"/></svg></b>
      <b class="b"><svg class="i16"><use href="#f2"/></svg></b>
      <b class="b"><svg class="i16"><use href="#f3"/></svg></b>
      <b class="b"><svg class="i16"><use href="#f4"/></svg></b>
      <b class="b"><svg class="i16"><use href="#f5"/></svg></b>
      <b class="b"><svg class="i16"><use href="#f6"/></svg></b>
    </div>
  </div>

  <main class="main">
    <aside class="left">
      <div class="panelhead"><span class="ptitle">图层视图</span><svg class="pin"><use href="#pin"/></svg><svg class="px"><use href="#close"/></svg></div>
      <div class="tree">
        <div class="node n1"><i class="expander"></i><i class="cb"></i><svg class="i14"><use href="#layer"/></svg><span>地图</span></div>
        <div class="node n2"><i class="cb"></i><svg class="i16"><use href="#book"/></svg><strong>屏幕作图层</strong></div>
      </div>
      <div class="btabs ltabs"><a class="btab active">图...</a><a class="btab">代...</a><a class="btab">分...</a><a class="btab">子...</a><a class="btab">行...</a><a class="btab">模...</a></div>
    </aside>
    <section class="right">
      <div class="doctabs">
        <div class="doctab"><svg class="i16"><use href="#globe"/></svg><strong>新工程1</strong><svg class="dx"><use href="#close"/></svg></div>
        <span class="nav-arrows"><i class="na-l"></i><i class="na-r"></i></span>
      </div>
      <div class="canvas"></div>
      <div class="panelhead cmdhead"><span class="ptitle">命令视图</span><svg class="pin"><use href="#pin"/></svg><svg class="px"><use href="#close"/></svg></div>
      <div class="cmd">
        <div class="cmd-log"><span class="spin"><i class="up"></i><i class="dn"></i></span></div>
        <div class="cmd-label">请输入命令:</div>
        <div class="cmd-input">命令:</div>
      </div>
      <div class="btabs rtabs"><a class="btab">错误列表</a><a class="btab active">命令视图</a></div>
    </section>
  </main>

  <div class="fontbar">
    <span class="combo c-font">宋体<i class="drop"></i></span>
    <i class="sep"></i>
    <span class="lbl">字高:</span>
    <span class="combo c-size">4<i class="drop"></i></span>
    <span class="lbl lbl-w">字宽:</span>
    <span class="combo c-size">4<i class="drop"></i></span>
    <span class="fa fa-blue">A</span>
    <span class="fa fa-out">A</span>
    <span class="fa fa-red">A</span>
    <i class="caret fa-caret"></i>
    <i class="sep"></i>
    <span class="fb bold">B</span><span class="fb ital">I</span><span class="fb und">U</span><span class="fb str">U</span>
    <i class="sep"></i>
    <span class="al al-l"></span><span class="al al-c"></span><span class="al al-r"></span>
    <i class="sep"></i>
    <span class="lbl lbl-sym">符号修改</span>
  </div>

  <footer class="status">
    <span class="st st1"></span><span class="st st2"></span><span class="st st3">屏幕坐标</span><span class="st st4">地图坐标</span><span class="st st5"></span>
  </footer>

  <div class="taskbar">
    <div class="startbtn"><svg class="winlogo"><use href="#win"/></svg><span>开始</span></div>
    <div class="quick">
      <svg class="i16"><use href="#ie"/></svg>
      <svg class="i16"><use href="#browser"/></svg>
      <svg class="i16"><use href="#cloud"/></svg>
      <span class="more">»</span>
    </div>
    <div class="tasks">
      <div class="task"><svg class="i16"><use href="#arc"/></svg><span><span class="lat">03.ArcGIS ...</span></span></div>
      <div class="task"><svg class="i16"><use href="#search"/></svg><span>搜索结果</span></div>
      <div class="task"><svg class="i16"><use href="#fold"/></svg><span><span class="lat">C:\</span>新建文<span class="lat">...</span></span></div>
      <div class="task"><svg class="i16"><use href="#movie"/></svg><span>、你和他手<span class="lat">...</span></span></div>
      <div class="task"><svg class="i16"><use href="#word"/></svg><span>农村土地承<span class="lat">...</span></span></div>
      <div class="task"><svg class="i16"><use href="#fold"/></svg><span><span class="lat">D:\</span>软件<span class="lat">\</span>农<span class="lat">...</span></span></div>
      <div class="task cur"><svg class="i16"><use href="#globe"/></svg><span><span class="lat">KqCoManRur...</span></span></div>
    </div>
    <svg class="kb"><use href="#kb"/></svg>
    <div class="tray">
      <svg class="i16"><use href="#cam"/></svg>
      <svg class="i16"><use href="#film"/></svg>
      <svg class="i16"><use href="#qq"/></svg>
      <svg class="i16"><use href="#net"/></svg>
      <svg class="i16"><use href="#shield"/></svg>
      <svg class="i16"><use href="#plus360"/></svg>
      <span class="clock">23:43</span>
    </div>
  </div>

  <svg class="cursor" viewBox="0 0 13 21"><path d="M1 1v16l4-4 3 7 3-1-3-7h5z" fill="#fff" stroke="#000"/></svg>
</div>
</body>
</html>
```

FILE: styles.css
```css
* { box-sizing: border-box; }
html, body { margin: 0; padding: 0; background: #000; height: 100%; overflow: hidden; }
body { font: 12px/1 "Noto Sans CJK SC", "Liberation Sans", sans-serif; color: #15428b; }
.sprite { position: absolute; width: 0; height: 0; }
.frame { position: relative; width: 1280px; height: 768px; margin: 0 43px; background: #bfdbff; display: flex; flex-direction: column; overflow: hidden; }
i, b { display: block; font-style: normal; }
.i16 { width: 16px; height: 16px; flex: none; display: block; }
.i14 { width: 15px; height: 15px; flex: none; display: block; }
.i18 { width: 18px; height: 16px; flex: none; display: block; }
.abc { font-size: 10.5px; }

/* title bar */
.titlebar { height: 26px; flex: none; display: flex; align-items: center; position: relative; border-bottom: 1px solid #9dbde6; background: linear-gradient(#e3edfd 0, #dfeafc 22%, #cfdff8 26%, #d6e4fa 60%, #e0ebfd 100%); }
.qat { margin-left: 41px; margin-top: -2px; width: 84px; height: 22px; border: 1px solid #9fbde4; border-left: 0; border-radius: 0 11px 11px 0; background: linear-gradient(#d8e6fb, #bcd3f2); display: flex; align-items: center; gap: 6px; padding-left: 13px; }
.qat .i16 { width: 15px; height: 15px; }
.qat-caret { margin-left: 6px; font-size: 10px; color: #15428b; }
.apptitle { position: absolute; left: 620px; top: 7px; font: 12px/14px "Liberation Mono", monospace; color: #3a6aa8; }
.winctl { position: absolute; right: 0; top: 0; height: 26px; width: 90px; }
.wc-min { position: absolute; left: 26px; top: 15px; width: 8px; height: 2px; background: #6d7d98; }
.wc-max { position: absolute; left: 50px; top: 9px; width: 8px; height: 7px; border: 1px solid #7d8ca6; border-top-width: 2px; }
.wc-close { position: absolute; left: 70px; top: 6px; font: bold 13px/14px "Liberation Sans", sans-serif; color: #6d7d98; }
.orb { position: absolute; left: 4px; top: 3px; width: 38px; height: 38px; border-radius: 50%; background: radial-gradient(circle at 50% 30%, #ffffff, #d8dcd4 65%, #7e8a78); display: flex; align-items: center; justify-content: center; box-shadow: 0 1px 2px rgba(40,60,100,.6); z-index: 3; }
.orb-globe { width: 31px; height: 31px; }
.timer { position: absolute; left: 1180px; top: 0; font: bold 13px/13px "Liberation Mono", monospace; letter-spacing: .2px; color: #f00; z-index: 3; }

/* tabs */
.tabs { height: 24px; flex: none; display: flex; align-items: flex-end; padding-left: 44px; background: #bfdbff; position: relative; }
.tab { height: 22px; line-height: 22px; padding: 0 15px; color: #15428b; white-space: nowrap; }
.tab.active { height: 23px; line-height: 22px; padding: 0 13px; margin: 0 2px; background: linear-gradient(#f4f8ff, #dbe9fc); border: 1px solid #8db2e3; border-bottom: 0; border-radius: 4px 4px 0 0; position: relative; top: 1px; z-index: 2; }
.style-menu { position: absolute; left: 1217px; top: 3px; display: flex; align-items: center; height: 16px; }
.style-menu .caret { margin-left: 9px; }
.help { width: 14px; height: 14px; margin-left: 7px; border-radius: 50%; border: 1px solid #8fa8d0; background: radial-gradient(circle at 50% 30%, #6ea4ea, #1e55b0); color: #fff; font: bold 10px/12px "Liberation Sans", sans-serif; text-align: center; }
.caret { display: block; width: 0; height: 0; border: 3px solid transparent; border-top: 4px solid #5a7ba8; border-bottom: 0; }

/* ribbon */
.ribbon { height: 91px; flex: none; display: grid; grid-template-columns: 70px 176px 70px 94px 118px 256px 251px 58px; column-gap: 3px; align-items: stretch; padding: 2px 2px 3px 3px; margin-right: 2px; border: 1px solid #8db2e3; border-radius: 3px; background: linear-gradient(#d6e6fb 0, #cbdcf6 35%, #c2d6f3 36%, #d2e3fa 75%, #e2f0ff 100%); }
.group { display: flex; flex-direction: column; border: 1px solid #9fbde6; border-radius: 3px; overflow: hidden; background: linear-gradient(#dbe8fb 0, #dbe8fb 30%, #cfdff7 32%, #d6e5fa 100%); }
.group.hot { background: linear-gradient(#eaf3ff 0, #eaf3ff 30%, #dce9fc 32%, #e2eeff 100%); border-color: #fff; box-shadow: 0 0 0 1px #8db2e3; }
.g-body { flex: 1; display: flex; justify-content: center; min-height: 0; }
.g-dwg { justify-content: flex-start; padding-left: 4px; gap: 6px; }
.g-survey { justify-content: flex-start; padding-left: 6px; gap: 6px; }
.g-survey .smalls { margin-right: 3px; }
.g-maint { justify-content: flex-start; padding-left: 3px; gap: 2px; }
.g-maint .big:last-child { margin-left: 3px; }
.cap { height: 15px; line-height: 15px; flex: none; text-align: center; color: #3e6aaa; background: #c2d9f6; white-space: nowrap; overflow: hidden; }
.hot .cap { background: #cfe2fb; }
.big { display: flex; flex-direction: column; align-items: center; white-space: nowrap; padding-top: 4px; position: relative; }
.big > span { line-height: 20px; height: 20px; }
.big .caret { margin-top: 0; }
.icon32 { width: 32px; height: 32px; display: block; background: #d6dcf3; }
.big.lit { width: 77px; height: 66px; margin-top: 1px; padding-top: 2px; border: 1px solid #e3c27a; border-radius: 2px; background: linear-gradient(#fffef8 0, #fff7d6 52%, #ffeeb0 53%, #ffe48c 75%, #ffd86c 100%); }
.smalls { display: flex; flex-direction: column; padding-top: 1px; }
.small { height: 22px; line-height: 22px; display: flex; align-items: center; white-space: nowrap; }
.small .caret { margin-left: 8px; }

/* toolbars */
.toolrow { height: 24px; flex: none; display: flex; }
.row1 { margin-top: 2px; }
.row2 { margin-top: 1px; }
.tb { height: 24px; display: flex; align-items: center; background: linear-gradient(#e6f0ff 0, #d9e7fc 45%, #c5d9f7 55%, #a9c6ef 100%); border-bottom: 1px solid #7ea6dc; border-radius: 0 4px 4px 0; }
.tb-a { width: 476px; margin-right: 1px; }
.tb-b { width: 629px; }
.tb-c { width: 227px; }
.tb-d { width: 200px; }
.tb-e { width: 570px; }
.grip { width: 2px; height: 14px; margin: 0 4px 0 4px; flex: none; background: repeating-linear-gradient(#5a7eb4 0 2px, transparent 2px 5px); }
.tb-d .grip { margin: 0 3px 0 3px; }
.b { width: 22px; height: 22px; flex: none; display: flex; align-items: center; justify-content: center; }
.b.on { background: linear-gradient(#ffe8b0, #ffc76a); border: 1px solid #c89c50; border-radius: 2px; }
.b.wide { margin: 0 6px 0 2px; }
.sep { width: 1px; height: 16px; margin: 0 3px 0 4px; flex: none; background: #7ea0cc; box-shadow: 1px 0 0 #eef5ff; }
.lbl { white-space: nowrap; color: #15428b; line-height: 20px; }
.tb-b .sep { margin: 0 7px 0 5px; }
.combo { height: 18px; background: #fff; color: #000; position: relative; display: block; line-height: 18px; padding-left: 2px; flex: none; white-space: nowrap; }
.drop { position: absolute; right: 0; top: 0; width: 14px; height: 18px; background: linear-gradient(#e6f0ff, #c2d8f6); }
.drop::after { content: ""; position: absolute; left: 4px; top: 7px; border: 3px solid transparent; border-top: 4px solid #45659a; border-bottom: 0; }
.c-layer { width: 156px; margin-left: 11px; }
.c-scale { width: 77px; margin: 0 5px 0 7px; font-family: "Liberation Sans", sans-serif; font-size: 11px; }
.c-code { width: 177px; margin: 0 1px 0 7px; }

/* main */
.main { flex: 1; min-height: 0; display: flex; margin-top: 2px; }
.left { width: 260px; flex: none; display: flex; flex-direction: column; }
.right { flex: 1; min-width: 0; margin-left: 2px; display: flex; flex-direction: column; }
.panelhead { height: 20px; flex: none; display: flex; align-items: center; padding: 0 5px 0 4px; background: #b9cfee; color: #15428b; }
.ptitle { flex: 1; }
.pin { width: 9px; height: 11px; margin-right: 8px; flex: none; }
.px { width: 9px; height: 9px; flex: none; }
.tree { flex: 1; min-height: 0; margin: 2px 2px 2px 3px; background: #fff; border: 1px solid #a0a4a8; padding-top: 0; color: #000; }
.node { display: flex; align-items: center; height: 16px; }
.n1 { padding-left: 7px; }
.n2 { padding-left: 44px; }
.n1 span { margin-left: 6px; }
.n2 .i16 { margin-left: 1px; }
.n2 strong { margin-left: 4px; font-weight: 700; letter-spacing: .8px; }
.expander { width: 9px; height: 9px; border: 1px solid #7a8a9c; margin-right: 9px; position: relative; background: #eef2f8; }
.expander::after { content: ""; position: absolute; left: 1px; top: 3px; width: 5px; height: 1px; background: #000; }
.cb { width: 12px; height: 12px; border: 1px solid #000; background: #fff; position: relative; }
.cb::after { content: ""; position: absolute; left: 3px; top: 0; width: 4px; height: 7px; border: solid #000; border-width: 0 2px 2px 0; transform: rotate(40deg); }
.btabs { height: 22px; flex: none; display: flex; align-items: flex-start; }
.btab { height: 20px; line-height: 19px; padding: 0 4px; white-space: nowrap; color: #15428b; }
.btab.active { background: linear-gradient(#eaf3ff, #fbfdff); border: 1px solid #9fbde6; border-top: 0; border-radius: 0 0 4px 4px; padding: 0 2px; }
.ltabs { padding-left: 7px; gap: 11px; }
.ltabs .btab.active { margin-right: -7px; width: 34px; }
.rtabs { padding-left: 5px; gap: 6px; }
.doctabs { height: 24px; flex: none; display: flex; align-items: flex-start; position: relative; padding-left: 7px; }
.doctab { width: 90px; height: 21px; margin-top: 3px; display: flex; align-items: flex-start; gap: 1px; padding: 0 0 0 2px; background: linear-gradient(#eff6ff, #d8e8fc); border: 1px solid #8db2e3; border-bottom: 0; border-radius: 5px 5px 0 0; }
.doctab .i16 { margin-top: 1px; }
.doctab strong { font-weight: 700; font-size: 12px; line-height: 17px; }
.dx { width: 9px; height: 9px; margin: 5px 0 0 9px; flex: none; }
.nav-arrows { position: absolute; right: 8px; top: 6px; display: flex; gap: 10px; }
.na-l, .na-r { width: 0; height: 0; border: 4px solid transparent; }
.na-l { border-left: 0; border-right: 5px solid #5c7aa6; }
.na-r { border-right: 0; border-left: 5px solid #5c7aa6; }
.canvas { height: 328px; flex: none; margin: 0 3px 0 5px; background: #fff; border: 2px solid #8f8b80; border-right-color: #d8d6cc; border-bottom-color: #d8d6cc; }
.cmdhead { margin: 6px 2px 0 3px; height: 21px; padding-bottom: 1px; }
.cmd { height: 95px; flex: none; margin: 2px 3px 0 5px; background: #eeeadf; border: 1px solid #aca899; padding: 2px 5px; display: flex; flex-direction: column; color: #000; }
.cmd-log { height: 22px; flex: none; border: 1px solid #7f9db9; position: relative; }
.spin { position: absolute; right: 2px; top: 1px; width: 16px; }
.spin i { height: 9px; background: #f4f2ea; border: 1px solid #fbfaf5; border-radius: 2px; margin-bottom: 1px; position: relative; }
.spin i::after { content: ""; position: absolute; left: 4px; border: 2px solid transparent; }
.up::after { top: 1px; border-bottom: 2px solid #aaa; border-top: 0; }
.dn::after { top: 3px; border-top: 2px solid #aaa; border-bottom: 0; }
.cmd-label { height: 28px; line-height: 29px; flex: none; }
.cmd-input { height: 35px; flex: none; background: #fff; border: 1px solid #7f9db9; padding: 3px 5px; line-height: 14px; }

/* font bar */
.fontbar { height: 25px; flex: none; display: flex; align-items: center; padding-left: 11px; background: linear-gradient(#eaf2ff 0, #dce9fd 45%, #bdd4f7 70%, #abc8f3 100%); }
.c-font { width: 116px; }
.c-size { width: 46px; margin-left: 8px; font-family: "Liberation Sans", sans-serif; font-size: 11px; }
.c-font + .sep { margin: 0 7px 0 5px; }
.lbl-w { margin-left: 6px; }
.fa { width: 22px; text-align: center; font: bold 16px/18px "Liberation Serif", serif; color: #0a1f8f; flex: none; }
.fa-blue { margin-left: 2px; }
.fa-out { font-size: 19px; color: #000; font-weight: normal; }
.fa-red { border-bottom: 3px solid #e80000; line-height: 15px; font-size: 15px; width: 16px; margin: 0 3px; }
.fa-caret { margin: 0 5px 0 3px; }
.fb { width: 22px; text-align: center; font: bold 12px/16px "Liberation Serif", serif; color: #111; flex: none; }
.ital { font-style: italic; }
.und { text-decoration: underline; }
.str { text-decoration: line-through; }
.al { width: 22px; height: 12px; flex: none; position: relative; }
.al::before { content: ""; position: absolute; top: 0; left: 3px; width: 13px; height: 12px; }
.al-l::before { background: linear-gradient(#222,#222) 0 0/13px 1px no-repeat, linear-gradient(#222,#222) 0 2px/9px 1px no-repeat, linear-gradient(#222,#222) 0 4px/13px 1px no-repeat, linear-gradient(#222,#222) 0 6px/9px 1px no-repeat, linear-gradient(#222,#222) 0 8px/13px 1px no-repeat, linear-gradient(#222,#222) 0 10px/9px 1px no-repeat; }
.al-c::before { background: linear-gradient(#222,#222) 0 0/13px 1px no-repeat, linear-gradient(#222,#222) 2px 2px/9px 1px no-repeat, linear-gradient(#222,#222) 0 4px/13px 1px no-repeat, linear-gradient(#222,#222) 2px 6px/9px 1px no-repeat, linear-gradient(#222,#222) 0 8px/13px 1px no-repeat, linear-gradient(#222,#222) 2px 10px/9px 1px no-repeat; }
.al-r::before { background: linear-gradient(#222,#222) 0 0/13px 1px no-repeat, linear-gradient(#222,#222) 4px 2px/9px 1px no-repeat, linear-gradient(#222,#222) 0 4px/13px 1px no-repeat, linear-gradient(#222,#222) 4px 6px/9px 1px no-repeat, linear-gradient(#222,#222) 0 8px/13px 1px no-repeat, linear-gradient(#222,#222) 4px 10px/9px 1px no-repeat; }
.lbl-sym { margin-left: 3px; }

/* status */
.status { height: 19px; flex: none; display: flex; border-top: 1px solid #7a9bc8; background: linear-gradient(#e4effe, #bccff0); }
.st { border-right: 1px solid #9fb2d0; line-height: 19px; padding-left: 1px; white-space: nowrap; box-shadow: 1px 0 0 #f0f6ff; flex: none; }
.st1 { width: 396px; }
.st2 { width: 246px; }
.st3 { width: 166px; }
.st4 { width: 306px; }
.st5 { width: 165px; }

/* taskbar */
.taskbar { height: 30px; flex: none; display: flex; align-items: center; background: linear-gradient(#2e6fe0 0, #2a62dc 12%, #245edb 50%, #2259d2 85%, #1a47ae 100%); color: #fff; position: relative; }
.startbtn { width: 97px; height: 30px; flex: none; display: flex; align-items: center; padding-left: 10px; border-radius: 0 12px 12px 0; background: linear-gradient(#5db55c 0, #3f9a42 15%, #3b923c 60%, #2c7a2f 100%); box-shadow: inset -2px 0 3px rgba(0,0,0,.35); }
.winlogo { width: 20px; height: 20px; }
.startbtn span { margin-left: 8px; font: italic 300 18px/20px "Noto Sans CJK SC", sans-serif; letter-spacing: 2px; }
.quick { width: 102px; flex: none; display: flex; align-items: center; padding-left: 12px; gap: 7px; }
.more { font: 12px/12px "Liberation Sans", sans-serif; color: #a8c8ff; margin: -8px 0 0 2px; }
.tasks { display: flex; gap: 2px; flex: none; width: 870px; }
.task { width: 122px; height: 24px; flex: none; display: flex; align-items: center; gap: 4px; padding-left: 9px; border-radius: 3px; background: linear-gradient(#4382ea, #3873e2); box-shadow: inset 0 1px 0 #5e95ee, 1px 0 0 #1c48a8; font: 12px/14px "Noto Sans CJK SC", sans-serif; color: #eaf2ff; white-space: nowrap; overflow: hidden; }
.lat { font: 10px/14px "Liberation Mono", monospace; }
.task.cur { background: #1e52b7; box-shadow: inset 1px 1px 2px #123a8a; }
.kb { width: 18px; height: 14px; flex: none; margin-left: 7px; }
.tray { position: absolute; right: 0; top: 0; width: 166px; height: 30px; display: flex; align-items: center; padding-left: 8px; gap: 2px; background: linear-gradient(#1896ec, #0f8ae6 60%, #0c7ad4); border-left: 1px solid #0f3a8a; }
.clock { margin-left: 6px; font: 10.5px/14px "Liberation Mono", monospace; color: #fff; }
.cursor { position: absolute; left: 851px; top: 111px; width: 13px; height: 21px; z-index: 5; }
```
